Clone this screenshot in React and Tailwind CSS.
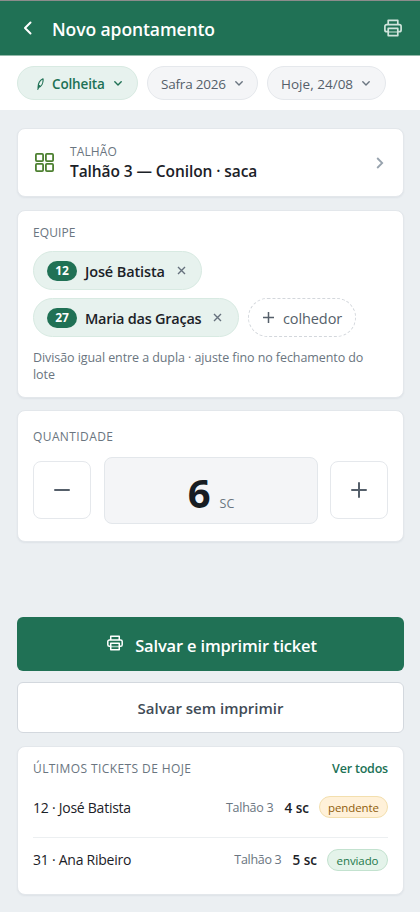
import React from "react";

const Printer = ({ size = 18 }) => (
  <svg width={size} height={size} viewBox="0 0 18 18" fill="none" stroke="currentColor" strokeWidth="1.7" strokeLinejoin="round">
    <path d="M4.2 5.6V1.4h9.6v4.2" />
    <path d="M4.2 12.7H2.7a1.8 1.8 0 0 1-1.8-1.8V7.4a1.8 1.8 0 0 1 1.8-1.8h12.6a1.8 1.8 0 0 1 1.8 1.8v3.5a1.8 1.8 0 0 1-1.8 1.8h-1.5" />
    <path d="M4.2 9.4h9.6v7.2H4.2z" />
    <path d="M4.2 13h9.6" strokeOpacity=".6" />
  </svg>
);

const Chevron = ({ className }) => (
  <svg className={className} width="8" height="5" viewBox="0 0 8 5" fill="none" stroke="currentColor" strokeWidth="1.4" strokeLinecap="round" strokeLinejoin="round">
    <path d="M.8.8 4 4 7.200.8" />
  </svg>
);

const Close = () => (
  <svg width="9" height="9" viewBox="0 0 9 9" fill="none" stroke="#66717d" strokeWidth="1.4">
    <path d="m1 1 7 7M8 1 1 8" />
  </svg>
);

const card = "bg-white border border-[#e3e7eb] rounded-[8px] shadow-[0_1px_2px_rgba(20,40,60,0.06)] px-[15px]";
const label = "text-[12px] leading-4 text-[#6a7580] whitespace-nowrap";

const Person = ({ number, name, className, nameClass }) => (
  <div className={"h-[39px] rounded-full border border-[#d8eae2] bg-[#e7f2ee] flex items-center pl-[13px] " + className}>
    <span className="w-[30px] h-5 rounded-full bg-[#207155] text-white text-[12px] font-bold flex items-center justify-center">
      {number}
    </span>
    <span className={"ml-2 mr-3 pt-0.5 text-[14.5px] font-semibold text-[#1b2127] whitespace-nowrap " + nameClass}>
      {name}
    </span>
    <Close />
  </div>
);

const App = () => {
  return (
    <div className="w-[420px] h-[912px] bg-[#ebeff2] font-['Open_Sans','Noto_Sans',sans-serif] overflow-hidden">
      <header className="h-14 bg-[#207155] border-t border-t-[#8c8c8c] border-b border-b-[#93b9aa] flex items-center pl-[23px] pr-[18px] text-white">
        <svg width="9" height="14" viewBox="0 0 9 14" fill="none" stroke="currentColor" strokeWidth="2" strokeLinecap="round" strokeLinejoin="round">
          <path d="M7.500 1.500 2 7l5.500 5.500" />
        </svg>
        <h1 className="ml-5 pt-[3px] text-[17.5px] font-semibold tracking-[-0.09px] whitespace-nowrap">Novo apontamento</h1>
        <span className="ml-auto text-[#d0e4dc]">
          <Printer />
        </span>
      </header>

      <div className="h-[54px] bg-white flex items-center pl-[17px] gap-[9px] text-[13.5px]">
        <button className="w-[121px] h-[34px] rounded-full bg-[#e7f2ee] border border-[#d8eae2] flex items-center pl-[19px] text-[#207155] font-semibold">
          <svg className="mt-0.5" width="7" height="12" viewBox="0 0 7 12" fill="none" stroke="currentColor" strokeWidth="1.2" strokeLinecap="round" strokeLinejoin="round">
            <path d="M6 .8C3.200 2 1 4.800 1.100 9.700 4.400 8.600 6.500 5 6 .8ZM2.600 7.600.8 11.300" />
          </svg>
          <span className="ml-2 pt-[3px] tracking-[-0.15px]">Colheita</span>
          <Chevron className="ml-[9px]" />
        </button>
        <button className="w-[111px] h-[34px] rounded-full bg-[#f4f5f7] border border-[#e5e8ec] flex items-center pl-[13px] text-[#555f6a]">
          <span className="pt-[3px] tracking-[-0.2px] whitespace-nowrap">Safra 2026</span>
          <Chevron className="ml-[9px] text-[#6a7580]" />
        </button>
        <button className="w-[119px] h-[34px] rounded-full bg-[#f4f5f7] border border-[#e5e8ec] flex items-center pl-[13px] text-[#555f6a]">
          <span className="pt-[3px] tracking-[0.02px] whitespace-nowrap">Hoje, 24/08</span>
          <Chevron className="ml-[9px] text-[#6a7580]" />
        </button>
      </div>

      <main className="pl-[17px] pr-4 pt-[18px]">
        <section className={card + " h-[69px] flex items-center"}>
          <svg className="ml-[2px]" width="19" height="19" viewBox="0 0 19 19" fill="none" stroke="#4d8030" strokeWidth="1.8">
            <rect x=".9" y=".9" width="7.200" height="7.200" rx="1" />
            <rect x="10.900" y=".9" width="7.200" height="7.200" rx="1" />
            <rect x=".9" y="10.900" width="7.200" height="7.200" rx="1" />
            <rect x="10.900" y="10.900" width="7.200" height="7.200" rx="1" />
          </svg>
          <div className="ml-4">
            <div className={label + " tracking-[0.1px]"}>TALHÃO</div>
            <div className="text-[15.5px] leading-[22px] font-semibold text-[#1b2127] tracking-[-0.09px] whitespace-nowrap">
              Talhão 3 — Conilon · saca
            </div>
          </div>
          <svg className="ml-auto mr-1" width="8" height="12" viewBox="0 0 8 12" fill="none" stroke="#98a3ae" strokeWidth="1.8">
            <path d="m1.200 1 5 5-5 5" />
          </svg>
        </section>

        <section className={card + " mt-[13px] h-[188px] pt-[14px]"}>
          <div className={label + " tracking-[0.1px]"}>EQUIPE</div>
          <div className="mt-2.5 flex flex-wrap gap-x-[9px] gap-y-2">
            <Person number="12" name="José Batista" className="w-[169px]" nameClass="tracking-[-0.13px]" />
            <div className="flex gap-[9px]">
              <Person number="27" name="Maria das Graças" className="w-[206px]" nameClass="tracking-[-0.25px]" />
              <button className="w-[108px] h-[39px] rounded-full border border-dashed border-[#d3d7dc] flex items-center pl-[14px] text-[14.5px] text-[#555f6a]">
                <svg width="11" height="11" viewBox="0 0 11 11" stroke="currentColor" strokeWidth="1.5">
                  <path d="M5.500 0v11M0 5.500h11" />
                </svg>
                <span className="ml-[9px] pt-0.5 tracking-[-0.1px]">colhedor</span>
              </button>
            </div>
          </div>
          <p className="mt-3 text-[12.5px] leading-[17px] text-[#6a7580] tracking-[-0.08px] whitespace-nowrap">
            Divisão igual entre a dupla · ajuste fino no fechamento do<br />lote
          </p>
        </section>

        <section className={card + " mt-3 h-[132px] pt-[18px]"}>
          <div className={label + " tracking-[0.4px]"}>QUANTIDADE</div>
          <div className="mt-3 flex items-start">
            <button className="mt-1 w-[58px] h-[58px] rounded-[8px] border border-[#e5e8ec] flex items-center justify-center">
              <svg width="16" height="16" viewBox="0 0 16 16" stroke="#555f6a" strokeWidth="2" strokeLinecap="round">
                <path d="M1 8h14" />
              </svg>
            </button>
            <div className="ml-[13px] mr-3 flex-1 h-[67px] rounded-[8px] bg-[#f4f5f7] border border-[#e3e7eb] flex items-baseline justify-center">
              <span className="text-[40px] leading-[69px] font-bold text-[#171d22]">6</span>
              <span className="ml-[9px] text-[12.5px] text-[#6a7580]">SC</span>
            </div>
            <button className="mt-1 w-[58px] h-[58px] rounded-[8px] border border-[#e5e8ec] flex items-center justify-center">
              <svg width="16" height="16" viewBox="0 0 16 16" stroke="#555f6a" strokeWidth="2" strokeLinecap="round">
                <path d="M1 8h14M8 1v14" />
              </svg>
            </button>
          </div>
        </section>

        <button className="mt-[75px] w-full h-[54px] rounded-[6px] bg-[#207155] text-white flex items-center justify-center pl-[3px] text-[16.5px] font-semibold">
          <span className="pb-0.5">
            <Printer size={16} />
          </span>
          <span className="ml-3 pt-[5px] tracking-[-0.17px]">Salvar e imprimir ticket</span>
        </button>
        <button className="mt-[11px] w-full h-[51px] rounded-[6px] bg-white border border-[#d3d8de] text-[#414b56] flex items-center justify-center text-[15px] font-semibold">
          <span className="pt-0.5">Salvar sem imprimir</span>
        </button>

        <section className={card + " mt-[13px] h-[149px] pt-[14px]"}>
          <div className="flex items-center justify-between">
            <span className={label + " tracking-[0.4px]"}>ÚLTIMOS TICKETS DE HOJE</span>
            <a href="#" className="text-[12.5px] leading-4 font-semibold text-[#207155] tracking-[-0.2px]">Ver todos</a>
          </div>
          <div className="h-[61px] pt-[19px] border-b border-[#eceff1] flex items-start">
            <span className="text-[14px] leading-6 text-[#1b2127] tracking-[-0.25px]">12 · José Batista</span>
            <span className="ml-auto text-[12.5px] leading-6 text-[#6a7580] tracking-[-0.25px]">Talhão 3</span>
            <span className="ml-[11px] text-[13.5px] leading-6 font-semibold text-[#1b2127]">4 sc</span>
            <span className="ml-[10px] w-[69px] h-[22px] rounded-full bg-[#fff1d9] border border-[#f3dfae] text-[#8f5e0c] text-[11.5px] tracking-[-0.1px] flex items-center justify-center pt-px">
              pendente
            </span>
          </div>
          <div className="pt-[11px] flex items-start">
            <span className="text-[14px] leading-[22px] text-[#1b2127] tracking-[-0.25px]">31 · Ana Ribeiro</span>
            <span className="ml-auto text-[12.5px] leading-[22px] text-[#6a7580] tracking-[-0.3px]">Talhão 3</span>
            <span className="ml-[11px] text-[13.5px] leading-[22px] font-semibold text-[#1b2127]">5 sc</span>
            <span className="ml-[10px] w-[61px] h-[22px] rounded-full bg-[#e4f3ea] border border-[#c3e2cf] text-[#23784a] text-[11.5px] tracking-[-0.1px] flex items-center justify-center pt-px">
              enviado
            </span>
          </div>
        </section>
      </main>
    </div>
  );
};

export default App;
